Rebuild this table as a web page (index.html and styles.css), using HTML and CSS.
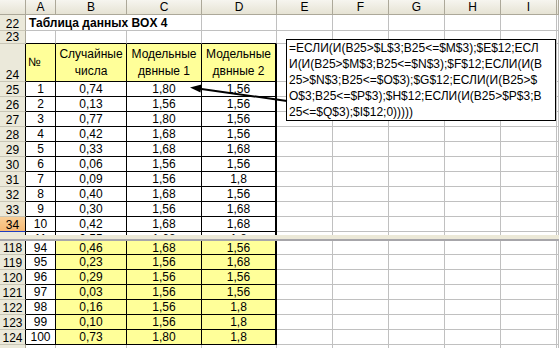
FILE: index.html
```html
<!DOCTYPE html>
<html lang="ru">
<head>
<meta charset="utf-8">
<title>Таблица данных BOX 4</title>
<link rel="stylesheet" href="styles.css">
</head>
<body>
<div class="sheet">
  <div class="row r-head">
    <div class="c corner"></div>
    <div class="c colh">A</div><div class="c colh">B</div><div class="c colh">C</div><div class="c colh">D</div>
    <div class="c colh">E</div><div class="c colh">F</div><div class="c colh">G</div><div class="c colh">H</div><div class="c colh">I</div><div class="c colh"></div>
  </div>
  <div class="row r16">
    <div class="c rowh">22</div>
    <div class="c title">Таблица данных BOX 4</div>
    <div class="c"></div>
    <div class="c"></div><div class="c"></div><div class="c"></div><div class="c"></div><div class="c"></div><div class="c"></div>
  </div>
  <div class="row r13">
    <div class="c rowh">23</div>
    <div class="c bb"></div><div class="c bb"></div><div class="c bb"></div><div class="c bb"></div>
    <div class="c"></div><div class="c"></div><div class="c"></div><div class="c"></div><div class="c"></div><div class="c"></div>
  </div>
  <div class="row r38">
    <div class="c rowh rowh-b">24</div>
    <div class="c bk yel hd hd-left">№</div>
    <div class="c bk yel hd">Случайные<br>числа</div>
    <div class="c bk yel hd">Модельные<br>двнные 1</div>
    <div class="c bk yel hd thick">Модельные<br>двнные 2</div>
    <div class="c"></div><div class="c"></div><div class="c"></div><div class="c"></div><div class="c"></div><div class="c"></div>
  </div>

  <div class="row r15"><div class="c rowh rowh-b">25</div><div class="c bk">1</div><div class="c bk">0,74</div><div class="c bk">1,80</div><div class="c bk thick">1,56</div><div class="c"></div><div class="c"></div><div class="c"></div><div class="c"></div><div class="c"></div><div class="c"></div></div>
  <div class="row r15"><div class="c rowh rowh-b">26</div><div class="c bk">2</div><div class="c bk">0,13</div><div class="c bk">1,56</div><div class="c bk thick">1,56</div><div class="c"></div><div class="c"></div><div class="c"></div><div class="c"></div><div class="c"></div><div class="c"></div></div>
  <div class="row r15"><div class="c rowh rowh-b">27</div><div class="c bk">3</div><div class="c bk">0,77</div><div class="c bk">1,80</div><div class="c bk thick">1,56</div><div class="c"></div><div class="c"></div><div class="c"></div><div class="c"></div><div class="c"></div><div class="c"></div></div>
  <div class="row r15"><div class="c rowh rowh-b">28</div><div class="c bk">4</div><div class="c bk">0,42</div><div class="c bk">1,68</div><div class="c bk thick">1,56</div><div class="c"></div><div class="c"></div><div class="c"></div><div class="c"></div><div class="c"></div><div class="c"></div></div>
  <div class="row r15"><div class="c rowh rowh-b">29</div><div class="c bk">5</div><div class="c bk">0,33</div><div class="c bk">1,68</div><div class="c bk thick">1,68</div><div class="c"></div><div class="c"></div><div class="c"></div><div class="c"></div><div class="c"></div><div class="c"></div></div>
  <div class="row r15"><div class="c rowh rowh-b">30</div><div class="c bk">6</div><div class="c bk">0,06</div><div class="c bk">1,56</div><div class="c bk thick">1,56</div><div class="c"></div><div class="c"></div><div class="c"></div><div class="c"></div><div class="c"></div><div class="c"></div></div>
  <div class="row r15"><div class="c rowh rowh-b">31</div><div class="c bk">7</div><div class="c bk">0,09</div><div class="c bk">1,56</div><div class="c bk thick">1,8</div><div class="c"></div><div class="c"></div><div class="c"></div><div class="c"></div><div class="c"></div><div class="c"></div></div>
  <div class="row r15"><div class="c rowh rowh-b">32</div><div class="c bk">8</div><div class="c bk">0,40</div><div class="c bk">1,68</div><div class="c bk thick">1,56</div><div class="c"></div><div class="c"></div><div class="c"></div><div class="c"></div><div class="c"></div><div class="c"></div></div>
  <div class="row r15"><div class="c rowh rowh-b">33</div><div class="c bk">9</div><div class="c bk">0,30</div><div class="c bk">1,56</div><div class="c bk thick">1,68</div><div class="c"></div><div class="c"></div><div class="c"></div><div class="c"></div><div class="c"></div><div class="c"></div></div>
  <div class="row r15"><div class="c rowh rowh-b rowh-sel">34</div><div class="c bk">10</div><div class="c bk">0,42</div><div class="c bk">1,68</div><div class="c bk thick">1,68</div><div class="c"></div><div class="c"></div><div class="c"></div><div class="c"></div><div class="c"></div><div class="c"></div></div>
  <div class="row part-top"><div class="c rowh rowh-b">35</div><div class="c bk">11</div><div class="c bk">0,55</div><div class="c bk">1,68</div><div class="c bk thick">1,8</div><div class="c"></div><div class="c"></div><div class="c"></div><div class="c"></div><div class="c"></div><div class="c"></div></div>

  <div class="split"></div>

  <div class="row r14"><div class="c rowh rowh-b">118</div><div class="c bk">94</div><div class="c bk yel">0,46</div><div class="c bk yel">1,68</div><div class="c bk yel thick">1,56</div><div class="c"></div><div class="c"></div><div class="c"></div><div class="c"></div><div class="c"></div><div class="c"></div></div>
  <div class="row r15"><div class="c rowh rowh-b">119</div><div class="c bk">95</div><div class="c bk yel">0,23</div><div class="c bk yel">1,56</div><div class="c bk yel thick">1,68</div><div class="c"></div><div class="c"></div><div class="c"></div><div class="c"></div><div class="c"></div><div class="c"></div></div>
  <div class="row r15"><div class="c rowh rowh-b">120</div><div class="c bk">96</div><div class="c bk yel">0,29</div><div class="c bk yel">1,56</div><div class="c bk yel thick">1,56</div><div class="c"></div><div class="c"></div><div class="c"></div><div class="c"></div><div class="c"></div><div class="c"></div></div>
  <div class="row r15"><div class="c rowh rowh-b">121</div><div class="c bk">97</div><div class="c bk yel">0,03</div><div class="c bk yel">1,56</div><div class="c bk yel thick">1,56</div><div class="c"></div><div class="c"></div><div class="c"></div><div class="c"></div><div class="c"></div><div class="c"></div></div>
  <div class="row r15"><div class="c rowh rowh-b">122</div><div class="c bk">98</div><div class="c bk yel">0,16</div><div class="c bk yel">1,56</div><div class="c bk yel thick">1,8</div><div class="c"></div><div class="c"></div><div class="c"></div><div class="c"></div><div class="c"></div><div class="c"></div></div>
  <div class="row r15"><div class="c rowh rowh-b">123</div><div class="c bk">99</div><div class="c bk yel">0,10</div><div class="c bk yel">1,56</div><div class="c bk yel thick">1,8</div><div class="c"></div><div class="c"></div><div class="c"></div><div class="c"></div><div class="c"></div><div class="c"></div></div>
  <div class="row r15"><div class="c rowh rowh-b">124</div><div class="c bk">100</div><div class="c bk yel">0,73</div><div class="c bk yel">1,80</div><div class="c bk yel thick">1,8</div><div class="c"></div><div class="c"></div><div class="c"></div><div class="c"></div><div class="c"></div><div class="c"></div></div>
  <div class="row part-top"><div class="c rowh">125</div><div class="c"></div><div class="c"></div><div class="c"></div><div class="c"></div><div class="c"></div><div class="c"></div><div class="c"></div><div class="c"></div><div class="c"></div><div class="c"></div></div>

  <div class="textbox">=ЕСЛИ(И(B25&gt;$L$3;B25&lt;=$M$3);$E$12;ЕСЛ<br>И(И(B25&gt;$M$3;B25&lt;=$N$3);$F$12;ЕСЛИ(И(B<br>25&gt;$N$3;B25&lt;=$O$3);$G$12;ЕСЛИ(И(B25&gt;$<br>O$3;B25&lt;=$P$3);$H$12;ЕСЛИ(И(B25&gt;$P$3;B<br>25&lt;=$Q$3);$I$12;0)))))</div>

  <svg class="arrow" width="559" height="348" viewBox="0 0 559 348">
    <line x1="287" y1="101" x2="198" y2="88.5" stroke="#000" stroke-width="2"/>
    <polygon points="190,87.5 201.5,84.5 200.5,92.5" fill="#000"/>
  </svg>
</div>
</body>
</html>
```

FILE: styles.css
```css
html, body {
  margin: 0;
  padding: 0;
  background: #fff;
}
body {
  font-family: "Liberation Sans", Arial, sans-serif;
  font-size: 12px;
  color: #000;
}
.sheet {
  position: relative;
  width: 559px;
  height: 348px;
  overflow: hidden;
  display: flex;
  flex-direction: column;
}
.row {
  display: grid;
  grid-template-columns: 26px 30px 71px 75px 75px 56px 56px 56px 56px 56px 1fr;
  flex: none;
}
.c {
  box-sizing: border-box;
  border-right: 1px solid #c0c0c0;
  border-bottom: 1px solid #c0c0c0;
  overflow: hidden;
  white-space: nowrap;
  display: flex;
  align-items: center;
  justify-content: center;
  line-height: 14px;
}
.r-head { height: 15px; }
.r16 { height: 16px; }
.r13 { height: 13px; }
.r38 { height: 38px; }
.r15 { height: 15px; }
.r14 { height: 14px; }
.part-top { height: 3px; overflow: hidden; }
.part-top .c { height: 15px; }

.corner, .colh {
  background: linear-gradient(#f6f5ef, #e6e3d4);
  border-right-color: #aca899;
  border-bottom-color: #aca899;
}
.rowh {
  background: #ebe9da;
  border-right-color: #aca899;
  border-bottom-color: #c9c6b6;
  align-items: flex-end;
  line-height: 12px;
}
.rowh-b { border-right-color: #000; }
.rowh-sel {
  background: linear-gradient(#f9cf97, #f6b974);
  border-bottom-color: #1f3fbf;
}

.title {
  grid-column: span 3;
  justify-content: flex-start;
  padding-left: 3px;
  font-weight: bold;
}
.bb { border-bottom-color: #000; }
.bk {
  border-right-color: #000;
  border-bottom-color: #000;
}
.thick { border-right-width: 2px; }
.yel { background: #ffff99; }
.hd {
  white-space: normal;
  text-align: center;
  line-height: 17px;
}
.hd-left {
  justify-content: flex-start;
  padding-left: 2px;
}

.split {
  flex: none;
  box-sizing: border-box;
  height: 6px;
  background: #ece9d8;
  border-bottom: 2px solid #a7a6aa;
}

.textbox {
  position: absolute;
  left: 286px;
  top: 39px;
  width: 270px;
  height: 82px;
  box-sizing: border-box;
  border: 1px solid #000;
  background: #fff;
  padding: 0 0 0 2px;
  line-height: 16px;
  white-space: nowrap;
}
.arrow {
  position: absolute;
  left: 0;
  top: 0;
  pointer-events: none;
}
```
